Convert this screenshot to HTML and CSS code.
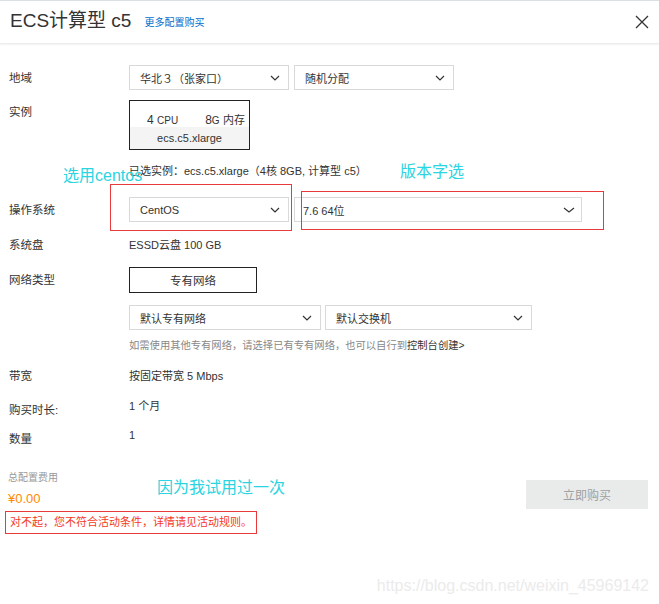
FILE: index.html
```html
<!DOCTYPE html>
<html lang="zh-CN">
<head>
<meta charset="utf-8">
<title>ECS计算型 c5</title>
<link rel="stylesheet" href="styles.css">
</head>
<body>
<div class="page">
  <div class="top-line"></div>
  <header class="header">
    <h1 class="title">ECS计算型 c5</h1>
    <a class="more-link" href="#">更多配置购买</a>
    <span class="spacer"></span>
    <svg class="close" width="14" height="14" viewBox="0 0 14 14"><path d="M1 1 L13 13 M13 1 L1 13" stroke="#333" stroke-width="1.3" fill="none"/></svg>
  </header>

  <main class="form">
    <div class="row row-center">
      <div class="label">地域</div>
      <div class="controls">
        <div class="select w160"><span>华北３（张家口）</span><svg class="chev" width="10" height="6" viewBox="0 0 10 6"><path d="M1 1 L5 5 L9 1" fill="none" stroke="#333" stroke-width="1.2"/></svg></div>
        <div class="select w160"><span>随机分配</span><svg class="chev" width="10" height="6" viewBox="0 0 10 6"><path d="M1 1 L5 5 L9 1" fill="none" stroke="#333" stroke-width="1.2"/></svg></div>
      </div>
    </div>

    <div class="row row-card">
      <div class="label label-tall">实例</div>
      <div class="card">
        <div class="card-top"><span class="big">4</span>&nbsp;<span class="small">CPU</span><span class="gapper"></span><span class="big">8</span><span class="small">G</span>&nbsp;<span class="mid">内存</span></div>
        <div class="card-bottom">ecs.c5.xlarge</div>
      </div>
    </div>

    <div class="row row-selected">
      <div class="label"></div>
      <div class="value">已选实例：ecs.c5.xlarge（4核 8GB, 计算型 c5）</div>
    </div>

    <div class="row row-center row-os">
      <div class="label">操作系统</div>
      <div class="controls">
        <div class="select w160"><span>CentOS</span><svg class="chev" width="10" height="6" viewBox="0 0 10 6"><path d="M1 1 L5 5 L9 1" fill="none" stroke="#333" stroke-width="1.2"/></svg></div>
        <div class="select w288 tight"><span>7.6 64位</span><svg class="chev" width="12" height="6" viewBox="0 0 12 6"><path d="M1 1 L6 5 L11 1" fill="none" stroke="#333" stroke-width="1.2"/></svg></div>
      </div>
    </div>

    <div class="row row-center row-disk">
      <div class="label">系统盘</div>
      <div class="value">ESSD云盘 100 GB</div>
    </div>

    <div class="row row-center row-net">
      <div class="label">网络类型</div>
      <div class="btn-outline">专有网络</div>
    </div>

    <div class="row row-center row-vpc">
      <div class="label"></div>
      <div class="controls gap4">
        <div class="select w192"><span>默认专有网络</span><svg class="chev" width="10" height="6" viewBox="0 0 10 6"><path d="M1 1 L5 5 L9 1" fill="none" stroke="#333" stroke-width="1.2"/></svg></div>
        <div class="select w207"><span>默认交换机</span><svg class="chev" width="10" height="6" viewBox="0 0 10 6"><path d="M1 1 L5 5 L9 1" fill="none" stroke="#333" stroke-width="1.2"/></svg></div>
      </div>
    </div>

    <div class="row row-hint">
      <div class="label"></div>
      <div class="hint">如需使用其他专有网络，请选择已有专有网络，也可以自行到<span class="hint-link">控制台创建&gt;</span></div>
    </div>

    <div class="row row-center row-bw">
      <div class="label">带宽</div>
      <div class="value">按固定带宽 5 Mbps</div>
    </div>

    <div class="row row-dur">
      <div class="label label-low">购买时长:</div>
      <div class="value">1 个月</div>
    </div>

    <div class="row row-qty">
      <div class="label label-low">数量</div>
      <div class="value">1</div>
    </div>
  </main>

  <footer class="footer">
    <div class="footer-left">
      <div class="total-label">总配置费用</div>
      <div class="price">¥0.00</div>
      <div class="error">对不起，您不符合活动条件，详情请见活动规则。</div>
    </div>
    <div class="buy-btn">立即购买</div>
  </footer>

  <div class="note note-centos">选用centos</div>
  <div class="note note-version">版本字选</div>
  <div class="note note-trial">因为我试用过一次</div>
  <div class="mark mark-os"></div>
  <div class="mark mark-ver"></div>
  <div class="mark mark-err"></div>
  <div class="watermark">https://blog.csdn.net/weixin_45969142</div>
</div>
</body>
</html>
```

FILE: styles.css
```css
* { box-sizing: border-box; }
html, body { margin: 0; padding: 0; background: #fff; }
body {
  font-family: "Liberation Sans", "Noto Sans CJK SC", sans-serif;
  color: #333;
  width: 659px;
  height: 604px;
  overflow: hidden;
}
.page { position: relative; width: 659px; height: 604px; }
.top-line { height: 1px; background: #dcdfe3; }
.header {
  height: 43px;
  display: flex;
  align-items: center;
  padding: 0 10px 0 10px;
  border-bottom: 1px solid #ececec;
  box-shadow: 0 1px 2px rgba(0,0,0,0.05);
}
.title {
  margin: 0;
  font-size: 19px;
  font-weight: normal;
  line-height: 24px;
  color: #333;
  margin-top: -3px;
}
.more-link {
  margin-left: 13px;
  font-size: 10px;
  line-height: 12px;
  color: #0070cc;
  text-decoration: none;
  margin-top: 2px;
}
.spacer { flex: 1; }
.close { margin-right: 0; margin-top: -1px; }

.form { padding: 21px 0 0 9px; }
.row { display: flex; align-items: flex-start; }
.row-center { align-items: center; }
.label {
  width: 120px;
  flex: none;
  font-size: 11.5px;
  line-height: 16px;
  color: #333;
}
.label-tall { line-height: 24px; }
.label-low { padding-top: 4px; }
.value { font-size: 11px; line-height: 16px; color: #333; }
.controls { display: flex; gap: 5px; }
.controls.gap4 { gap: 4px; }

.select {
  height: 25px;
  border: 1px solid #d9d9d9;
  display: flex;
  align-items: center;
  justify-content: space-between;
  padding: 0 8px 0 10px;
  font-size: 11px;
  color: #333;
  background: #fff;
}
.select.tight { padding-left: 8px; padding-right: 6px; }
.w160 { width: 160px; }
.w288 { width: 288px; }
.w192 { width: 192px; }
.w207 { width: 207px; }
.chev { flex: none; }

.row-card { margin-top: 10px; }
.card {
  width: 121px;
  height: 50px;
  border: 1px solid #222;
  display: flex;
  flex-direction: column;
}
.card-top {
  height: 26px;
  padding: 12px 0 0 17px;
  font-size: 12px;
  color: #333;
  line-height: 14px;
  white-space: nowrap;
}
.card-top .big { font-size: 12px; }
.card-top .mid { font-size: 11px; }
.card-top .small { font-size: 10px; }
.card-top .gapper { display: inline-block; width: 27px; }
.card-bottom {
  flex: 1;
  background: #f4f4f4;
  font-size: 11px;
  line-height: 22px;
  text-align: center;
  color: #333;
}

.row-selected { margin-top: 13px; }
.row-os { margin-top: 18px; }
.row-disk { margin-top: 15px; }
.row-net { margin-top: 14px; }
.btn-outline {
  width: 128px;
  height: 26px;
  border: 1px solid #222;
  font-size: 11.5px;
  display: flex;
  align-items: center;
  justify-content: center;
  color: #333;
}
.row-vpc { margin-top: 12px; }
.row-hint { margin-top: 9px; }
.hint { font-size: 10.3px; line-height: 14px; color: #888; }
.hint-link { color: #333; }
.row-bw { margin-top: 15px; }
.row-dur { margin-top: 14px; }
.row-qty { margin-top: 9px; }

.footer {
  display: flex;
  justify-content: space-between;
  align-items: flex-start;
  padding: 0 11px 0 8px;
  margin-top: 24px;
}
.total-label { font-size: 10px; line-height: 14px; color: #999; }
.price { font-size: 13px; line-height: 16px; color: #ff8a00; margin-top: 6px; }
.error { font-size: 11px; line-height: 14px; color: #f5391f; margin-top: 8px; padding-left: 2px; }
.buy-btn {
  width: 122px;
  height: 29px;
  margin-top: 9px;
  background: #e9ebeb;
  color: #a0a0a0;
  font-size: 12px;
  display: flex;
  align-items: center;
  justify-content: center;
}

.note {
  position: absolute;
  color: #2ad4e0;
  font-size: 16px;
  line-height: 20px;
  white-space: nowrap;
}
.note-centos { left: 63px; top: 166px; }
.note-version { left: 400px; top: 162px; }
.note-trial { left: 157px; top: 478px; }
.mark { position: absolute; border: 1px solid #e83a3a; }
.mark-os { left: 110px; top: 184px; width: 182px; height: 47px; }
.mark-ver { left: 301px; top: 191px; width: 303px; height: 39px; }
.mark-err { left: 5px; top: 511px; width: 252px; height: 23px; }
.watermark {
  position: absolute;
  right: 10px;
  top: 576px;
  font-size: 16px;
  line-height: 20px;
  color: #ebebeb;
  white-space: nowrap;
}
```
